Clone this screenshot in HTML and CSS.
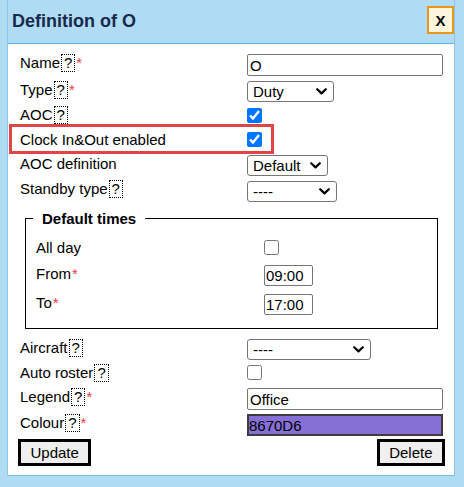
FILE: index.html
```html
<!DOCTYPE html>
<html lang="en">
<head>
<meta charset="utf-8">
<title>Definition of O</title>
<link rel="stylesheet" href="styles.css">
</head>
<body>
<div class="dialog">
  <div class="header">
    <span class="title">Definition of O</span>
    <button class="close" type="button">X</button>
  </div>
  <div class="panel">
    <div class="form form-top">
      <div class="lbl">Name<span class="help">?</span><span class="req">*</span></div>
      <input type="text" class="txt wide" value="O">

      <div class="lbl">Type<span class="help">?</span><span class="req">*</span></div>
      <select class="sel sel-type"><option>Duty</option></select>

      <div class="lbl">AOC<span class="help">?</span></div>
      <input type="checkbox" class="cb" checked>

      <div class="lbl hl">Clock In&amp;Out enabled</div>
      <input type="checkbox" class="cb" checked>

      <div class="lbl">AOC definition</div>
      <select class="sel sel-aoc"><option>Default</option></select>

      <div class="lbl">Standby type<span class="help">?</span></div>
      <select class="sel sel-standby"><option>----</option></select>
    </div>

    <fieldset class="times">
      <legend>Default times</legend>
      <div class="form form-inner">
        <div class="lbl">All day</div>
        <input type="checkbox" class="cb">

        <div class="lbl">From<span class="req">*</span></div>
        <input type="text" class="txt time" value="09:00">

        <div class="lbl">To<span class="req">*</span></div>
        <input type="text" class="txt time" value="17:00">
      </div>
    </fieldset>

    <div class="form form-bottom">
      <div class="lbl">Aircraft<span class="help">?</span></div>
      <select class="sel sel-aircraft"><option>----</option></select>

      <div class="lbl">Auto roster<span class="help">?</span></div>
      <input type="checkbox" class="cb">

      <div class="lbl">Legend<span class="help">?</span><span class="req">*</span></div>
      <input type="text" class="txt wide" value="Office">

      <div class="lbl">Colour<span class="help">?</span><span class="req">*</span></div>
      <input type="text" class="txt wide colour" value="8670D6">
    </div>

    <div class="actions">
      <button type="button" class="btn">Update</button>
      <button type="button" class="btn">Delete</button>
    </div>
  </div>
</div>
</body>
</html>
```

FILE: styles.css
```css
html, body {
  margin: 0;
  padding: 0;
}

body {
  background: #b0dcf3;
  font-family: "Liberation Sans", Arial, sans-serif;
  font-size: 15px;
  color: #000;
  height: 487px;
  overflow: hidden;
}

.dialog {
  margin-left: 7px;
  width: 448px;
  border-left: 1px solid #8cc5ea;
  border-right: 1px solid #8cc5ea;
  box-sizing: border-box;
}

.header {
  height: 43px;
  display: flex;
  justify-content: space-between;
  align-items: center;
  padding: 0 0 0 4px;
  background: #b0dcf3;
}

.title {
  font-size: 18px;
  font-weight: bold;
  color: #182a4c;
}

.close {
  align-self: flex-start;
  margin-top: 6px;
  width: 27px;
  height: 28px;
  padding: 1px 0 0;
  box-sizing: border-box;
  background: #fff4dc;
  border: 2px solid #e8951f;
  border-radius: 0;
  font-family: "Liberation Sans", Arial, sans-serif;
  font-size: 15px;
  font-weight: bold;
  color: #000;
}

.panel {
  background: #fff;
  border-top: 1px solid #66b2e3;
  border-bottom: 1px solid #7cbde6;
  padding: 6px 11px 9px 12px;
}

.form {
  display: grid;
  grid-template-columns: 227px 1fr;
}

.form > * {
  align-self: center;
  justify-self: start;
}

.form-top {
  grid-template-rows: 26px 27px 24px 24px 24px 28px;
}

.form-inner {
  grid-template-columns: 228px 1fr;
  grid-template-rows: 25px 27px 30px;
  margin-left: 3px;
}

.form-bottom {
  grid-template-rows: 25px 25px 24px 28px;
  margin-top: 6px;
}

.lbl {
  line-height: 17px;
  white-space: nowrap;
}

.help {
  display: inline-block;
  border: 1px dotted #000;
  padding: 0 2px;
  margin-left: 1px;
  line-height: 16px;
}

.req {
  color: #f03a3a;
  margin-left: 1px;
}

.hl {
  position: relative;
}

.hl::after {
  content: "";
  position: absolute;
  left: -11px;
  top: -7px;
  width: 265px;
  height: 30px;
  border: 3px solid #e04545;
  box-sizing: border-box;
}

.txt {
  margin: 4px 0 0;
  box-sizing: border-box;
  height: 22px;
  padding: 1px 2px;
  border: 1px solid #767676;
  border-radius: 2px;
  font-family: "Liberation Sans", Arial, sans-serif;
  font-size: 15px;
  color: #000;
  background: #fff;
}

.wide {
  width: 196px;
}

.time {
  width: 49px;
  height: 21px;
  padding: 0 1px;
}

.colour {
  background: #8670d6;
  border: 2px solid #3c3c3c;
  border-radius: 0;
  padding: 0;
}

.sel {
  -webkit-appearance: none;
  appearance: none;
  margin: 4px 0 0;
  box-sizing: border-box;
  height: 21px;
  padding: 0 0 0 5px;
  border: 1px solid #767676;
  border-radius: 3px;
  font-family: "Liberation Sans", Arial, sans-serif;
  font-size: 15px;
  line-height: 19px;
  color: #000;
  background-color: #fff;
  background-image: url("data:image/svg+xml,%3Csvg xmlns='http://www.w3.org/2000/svg' width='11' height='7' viewBox='0 0 11 7'%3E%3Cpath d='M1.2 1.2 L5.5 5.4 L9.8 1.2' fill='none' stroke='%23000' stroke-width='2.2' stroke-linecap='round' stroke-linejoin='round'/%3E%3C/svg%3E");
  background-repeat: no-repeat;
  background-position: right 6px center;
  background-size: 11px 7px;
}

.sel-type { width: 87px; }
.sel-aoc { width: 81px; }
.sel-standby { width: 90px; }
.sel-aircraft { width: 124px; }

.cb {
  width: 15px;
  height: 15px;
  margin: 0;
}

.times {
  margin: 7px 0 0 5px;
  width: 413px;
  box-sizing: border-box;
  border: 1px solid #000;
  padding: 8px 7px 11px;
  min-width: 0;
}

.times legend {
  padding: 0 9px;
  font-weight: bold;
  font-size: 15px;
  line-height: 17px;
}

.actions {
  display: flex;
  justify-content: space-between;
  margin: 2px -2px 0 -2px;
}

.btn {
  height: 27px;
  padding: 0 9.5px;
  background: #efefef;
  border: 3px solid #000;
  border-radius: 0;
  font-family: "Liberation Sans", Arial, sans-serif;
  font-size: 15px;
  color: #000;
}
```
